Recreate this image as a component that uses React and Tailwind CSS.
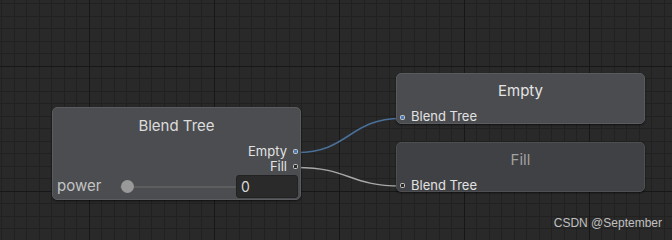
import React from "react";

function Port({ connected }) {
  return (
    <span
      className={
        "inline-block w-[5px] h-[5px] rounded-[1.5px] border border-[#c8c8c8] " +
        (connected ? "bg-[#4a7cb5]" : "bg-[#2a2a2a]")
      }
    />
  );
}

function Grid() {
  const xs = [];
  for (let k = 0; 1.8 + 12.5 * k < 672; k++) xs.push({ v: Math.floor(1.8 + 12.5 * k), major: (k - 7) % 10 === 0 });
  const ys = [];
  for (let k = 0; 3.8 + 12.5 * k < 240; k++) ys.push({ v: Math.floor(3.8 + 12.5 * k), major: (k - 5) % 10 === 0 });
  return (
    <svg className="absolute inset-0" width="672" height="240" shapeRendering="crispEdges">
      <rect width="672" height="240" fill="#292929" />
      {xs.filter((l) => !l.major).map((l) => (
        <rect key={"x" + l.v} x={l.v} y="0" width="1" height="240" fill="#212121" />
      ))}
      {ys.filter((l) => !l.major).map((l) => (
        <rect key={"y" + l.v} x="0" y={l.v} width="672" height="1" fill="#212121" />
      ))}
      {xs.filter((l) => l.major).map((l) => (
        <rect key={"X" + l.v} x={l.v} y="0" width="1" height="240" fill="#171717" />
      ))}
      {ys.filter((l) => l.major).map((l) => (
        <rect key={"Y" + l.v} x="0" y={l.v} width="672" height="1" fill="#171717" />
      ))}
    </svg>
  );
}

function Wires() {
  return (
    <svg className="absolute inset-0" width="672" height="240">
      <path d="M 297 152.5 C 349 152.5, 349 118.5, 401 118.5" stroke="#4a6f98" strokeWidth="1.5" fill="none" />
      <path d="M 297 167.5 C 349 167.5, 349 186, 401 186" stroke="#a8a8a8" strokeWidth="1.5" fill="none" />
    </svg>
  );
}

export default function App() {
  const font = "font-['Inter','Noto_Sans',sans-serif]";
  return (
    <div className={"relative w-[672px] h-[240px] overflow-hidden bg-[#292929] " + font}>
      <Grid />
      <Wires />

      {/* Blend Tree node */}
      <div className="absolute left-[52px] top-[107px] w-[249px] h-[93px] rounded-[5px] bg-[#4b4d50] border border-[#5a5c5f] shadow-[0_1px_2px_rgba(0,0,0,0.6)] flex flex-col">
        <div className="h-[36px] flex items-center justify-center text-[15px] text-[#dcdcdc]">Blend Tree</div>
        <div className="h-[15px] flex items-center justify-end pr-[2px] gap-[6px] text-[13px] text-[#e2e2e2]">
          <span>Empty</span>
          <Port connected />
        </div>
        <div className="h-[15px] flex items-center justify-end pr-[2px] gap-[6px] text-[13px] text-[#e2e2e2]">
          <span>Fill</span>
          <Port />
        </div>
        <div className="mt-[1px] h-[23px] flex items-center pl-[4px] pr-[2px]">
          <span className="w-[60px] text-[15px] text-[#c4c4c4]">power</span>
          <div className="relative w-[116px] h-[13px] flex items-center ml-[3px]">
            <div className="w-full h-[2px] bg-[#5e5e5e] rounded-full" />
            <div className="absolute left-[1px] top-0 w-[13px] h-[13px] rounded-full bg-[#999999]" />
          </div>
          <div className="ml-auto w-[62px] h-[23px] rounded-[3px] bg-[#2a2a2a] border border-[#222222] flex items-center pl-[4px] text-[14px] text-[#d8d8d8]">
            0
          </div>
        </div>
      </div>

      {/* Empty node */}
      <div className="absolute left-[396px] top-[73px] w-[249px] h-[51px] rounded-[5px] bg-[#4a4c4f] border border-[#595b5e] shadow-[0_1px_2px_rgba(0,0,0,0.6)] flex flex-col">
        <div className="h-[36px] flex items-center justify-center text-[15px] text-[#e4e4e4]">Empty</div>
        <div className="mt-[3px] h-[12px] flex items-center pl-[3px] gap-[6px] text-[13px] text-[#e2e2e2]">
          <Port connected />
          <span>Blend Tree</span>
        </div>
      </div>

      {/* Fill node */}
      <div className="absolute left-[396px] top-[142px] w-[249px] h-[50px] rounded-[5px] bg-[#3f4144] border border-[#4d4f52] shadow-[0_1px_2px_rgba(0,0,0,0.6)] flex flex-col">
        <div className="h-[36px] flex items-center justify-center text-[15px] text-[#a2a2a2]">Fill</div>
        <div className="mt-[3px] h-[11px] flex items-center pl-[3px] gap-[6px] text-[13px] text-[#e2e2e2]">
          <Port />
          <span>Blend Tree</span>
        </div>
      </div>

      <div className="absolute right-[10px] bottom-[8px] text-[12px] text-[#c0c0c0] font-['Liberation_Sans',sans-serif]">
        CSDN @September
      </div>
    </div>
  );
}
